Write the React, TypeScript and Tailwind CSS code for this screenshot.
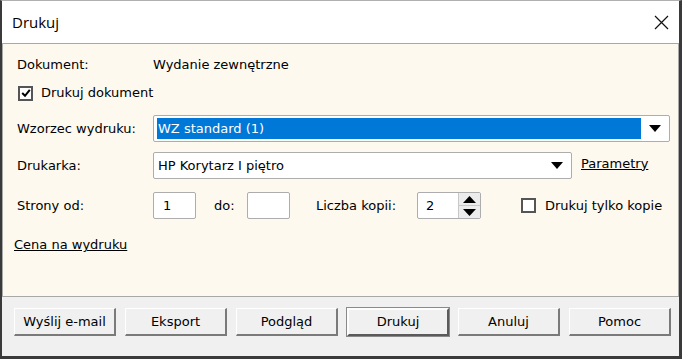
import React from "react";

const font = { fontFamily: "'DejaVu Sans', 'Liberation Sans', sans-serif" };

function Arrow() {
  return (
    <svg width="12" height="7" viewBox="0 0 12 7">
      <path d="M0 0 H12 L6 7 Z" fill="#000" />
    </svg>
  );
}

function Btn({ label, def }: { label: string; def?: boolean }) {
  return (
    <div
      className={
        "w-[102px] h-[28px] flex items-center justify-center bg-[#f0f0f0] text-[13px] text-black " +
        (def
          ? "border-2 border-t-[#fdfdfd] border-l-[#fdfdfd] border-r-[#5a5a5a] border-b-[#5a5a5a] outline outline-1 outline-[#8a8a8a]"
          : "border-t border-l border-t-[#ffffff] border-l-[#ffffff] border-r-2 border-b-2 border-r-[#7a7a7a] border-b-[#7a7a7a]")
      }
    >
      {label}
    </div>
  );
}

function Check({ checked }: { checked?: boolean }) {
  return (
    <div className="w-[15px] h-[15px] border-2 border-[#555555] bg-white flex items-center justify-center">
      {checked && (
        <svg width="10" height="10" viewBox="0 0 10 10">
          <path d="M1.2 5 L4 7.8 L8.8 1.8" stroke="#000" strokeWidth="2" fill="none" />
        </svg>
      )}
    </div>
  );
}

export default function App() {
  return (
    <div
      className="w-[682px] h-[359px] flex flex-col bg-white border-l-2 border-r-[3px] border-b-[3px] border-[#3a3a3a] border-t border-t-[#b0b0b0] overflow-hidden"
      style={font}
    >
      <div className="h-[42px] shrink-0 flex items-center justify-between pl-[10px] pr-[10px] bg-white">
        <span className="text-[15px] text-black" style={{ fontFamily: "'Open Sans', 'Noto Sans', sans-serif" }}>
          Drukuj
        </span>
        <svg width="15" height="15" viewBox="0 0 15 15">
          <path d="M1 1 L14 14 M14 1 L1 14" stroke="#111" strokeWidth="1.2" />
        </svg>
      </div>
      <div className="flex-1 flex flex-col bg-[#f0f0f0]">
        <div className="h-[254px] shrink-0 bg-[#fdf9ef] border border-[#a8a8a8] flex flex-col pl-[14px] pt-[12px] text-[13px] text-black">
          <div className="flex items-center h-[18px]">
            <span className="w-[136px]">Dokument:</span>
            <span>Wydanie zewnętrzne</span>
          </div>
          <div className="flex items-center h-[18px] mt-[10px] pl-[1px]">
            <Check checked />
            <span className="ml-[8px]">Drukuj dokument</span>
          </div>
          <div className="flex items-center mt-[13px]">
            <span className="w-[136px]">Wzorzec wydruku:</span>
            <div className="w-[517px] h-[27px] border border-[#adadad] rounded-[2px] bg-white flex items-center pl-[3px] pr-[8px]">
              <div className="flex-1 h-[21px] bg-[#0078d7] text-white flex items-center pl-[1px]">WZ standard (1)</div>
              <div className="ml-[8px]">
                <Arrow />
              </div>
            </div>
          </div>
          <div className="flex items-center mt-[10px]">
            <span className="w-[136px]">Drukarka:</span>
            <div className="w-[419px] h-[27px] border border-[#adadad] rounded-[2px] bg-white flex items-center justify-between pl-[4px] pr-[8px]">
              <span>HP Korytarz I piętro</span>
              <Arrow />
            </div>
            <span className="ml-[9px] underline mb-[4px]">Parametry</span>
          </div>
          <div className="flex items-center mt-[13px]">
            <span className="w-[136px]">Strony od:</span>
            <div className="w-[43px] h-[27px] border border-[#adadad] rounded-[2px] bg-white flex items-center pl-[9px]">1</div>
            <span className="ml-[18px] w-[33px]">do:</span>
            <div className="w-[43px] h-[27px] border border-[#adadad] rounded-[2px] bg-white"></div>
            <span className="ml-[26px] w-[101px]">Liczba kopii:</span>
            <div className="w-[64px] h-[27px] border border-[#adadad] rounded-[2px] bg-white flex items-center">
              <span className="flex-1 pl-[8px]">2</span>
              <div className="w-[22px] h-full flex flex-col border-l border-[#c8c8c8]">
                <div className="flex-1 flex items-center justify-center bg-[#ececec] border-b border-[#c8c8c8]">
                  <svg width="13" height="7" viewBox="0 0 13 7">
                    <path d="M0 7 H13 L6.5 0 Z" fill="#000" />
                  </svg>
                </div>
                <div className="flex-1 flex items-center justify-center bg-[#ececec]">
                  <svg width="13" height="7" viewBox="0 0 13 7">
                    <path d="M0 0 H13 L6.5 7 Z" fill="#000" />
                  </svg>
                </div>
              </div>
            </div>
            <div className="ml-[40px]">
              <Check />
            </div>
            <span className="ml-[9px]">Drukuj tylko kopie</span>
          </div>
          <div className="mt-[16px] -ml-[3px]">
            <span className="underline">Cena na wydruku</span>
          </div>
        </div>
        <div className="flex-1 flex items-start gap-[9px] pl-[12px] pt-[11px]">
          <Btn label="Wyślij e-mail" />
          <Btn label="Eksport" />
          <Btn label="Podgląd" />
          <Btn label="Drukuj" def />
          <Btn label="Anuluj" />
          <Btn label="Pomoc" />
        </div>
      </div>
    </div>
  );
}
